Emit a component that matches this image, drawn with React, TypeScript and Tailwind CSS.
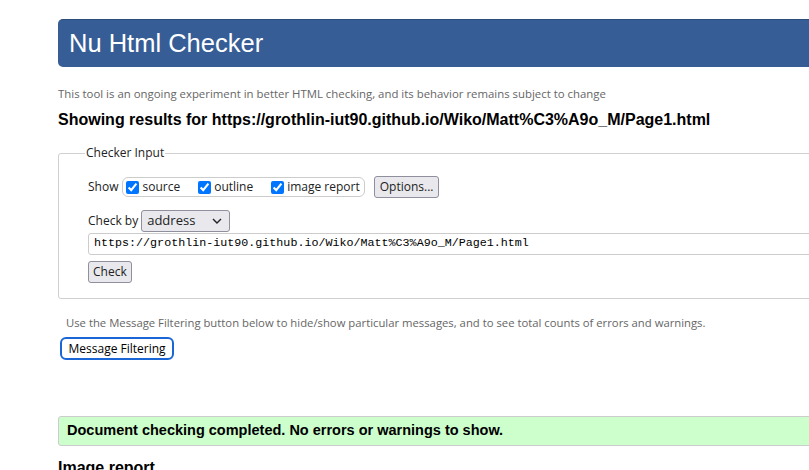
import React from "react"

const SANS = "font-['Segoe_UI','Open_Sans','Noto_Sans',sans-serif]"
const ARIAL = "font-['Liberation_Sans',Arial,sans-serif]"

function Check({ label }: { label: string }) {
  return (
    <label className="flex items-center">
      <input
        type="checkbox"
        defaultChecked
        className="m-0 mr-[3px] h-[13px] w-[13px] accent-[#0075ff]"
      />
      <span>{label}</span>
    </label>
  )
}

export default function App() {
  return (
    <div className={`h-[470px] w-[809px] overflow-hidden bg-white ${SANS} text-[12px] text-[#222]`}>
      <div className="w-[1000px] pl-[58px] pt-[19px]">
        {/* Title bar */}
        <header className="flex h-[48px] items-center rounded-[5px] border-t border-[#2c4c7a] bg-[#365d95] pl-[11px]">
          <h1 className={`${ARIAL} text-[25.5px] leading-none text-white`}>Nu Html Checker</h1>
        </header>

        <p className="mt-[19px] text-[11.4px] leading-[16px] text-[#666]">
          This tool is an ongoing experiment in better HTML checking, and its behavior remains subject to change
        </p>
        <h2 className={`${ARIAL} mt-[8px] text-[16px] font-bold leading-[20px] text-black`}>
          Showing results for https://grothlin-iut90.github.io/Wiko/Matt%C3%A9o_M/Page1.html
        </h2>

        {/* Checker Input */}
        <fieldset className="mt-[15px] h-[154px] rounded-[3px] border border-[#d0d0d0] pl-[29px]">
          <legend className="-ml-[3px] px-[1px] text-[12px] leading-[16px]">Checker Input</legend>

          <div className="mt-[15px] flex items-center">
            <span className="mr-[4px]">Show</span>
            <div className="flex h-[20px] items-center gap-[18px] rounded-[6px] border border-[#ccc] pl-[3px] pr-[4px]">
              <Check label="source" />
              <Check label="outline" />
              <Check label="image report" />
            </div>
            <button className="ml-[9px] h-[22px] rounded-[3px] border border-[#8f8f9d] bg-[#e9e9ed] px-[5px] text-[12px]">
              Options...
            </button>
          </div>

          <div className="mt-[12px] flex items-center">
            <span className="mr-[3px]">Check by</span>
            <div className="flex h-[22px] w-[89px] items-center justify-between rounded-[3px] border border-[#8f8f9d] bg-[#e9e9ed] pl-[5px] pr-[7px] text-[13px]">
              <span>address</span>
              <svg width="10" height="6" viewBox="0 0 10 6" fill="none" stroke="#222" strokeWidth="1.4">
                <path d="M1 1l4 4 4-4" />
              </svg>
            </div>
          </div>

          <div className="mt-[1px] flex h-[22px] items-center rounded-[3px] border border-[#ccc] pl-[5px] font-['Liberation_Mono',Consolas,monospace] text-[11.7px] text-black">
            https://grothlin-iut90.github.io/Wiko/Matt%C3%A9o_M/Page1.html
          </div>

          <button className="mt-[6px] h-[22px] rounded-[3px] border border-[#8f8f9d] bg-[#e9e9ed] px-[4px] text-[12px]">
            Check
          </button>
        </fieldset>

        <p className="mt-[16px] pl-[8px] text-[11.3px] leading-[16px] text-[#666]">
          Use the Message Filtering button below to hide/show particular messages, and to see total counts of errors and warnings.
        </p>
        <button className="ml-[2px] mt-[6px] h-[23px] rounded-[6px] border-2 border-[#1a66d6] bg-white px-[6.5px] text-[12px] text-black">
          Message Filtering
        </button>

        <div className={`${ARIAL} mt-[56px] flex h-[30px] items-center rounded-[3px] border border-[#ccc] bg-[#ccffcc] pl-[8px] text-[14.5px] font-bold text-black`}>
          Document checking completed. No errors or warnings to show.
        </div>

        <h2 className={`${ARIAL} mt-[12px] text-[16px] font-bold leading-[20px] text-black`}>Image report</h2>
      </div>
    </div>
  )
}
